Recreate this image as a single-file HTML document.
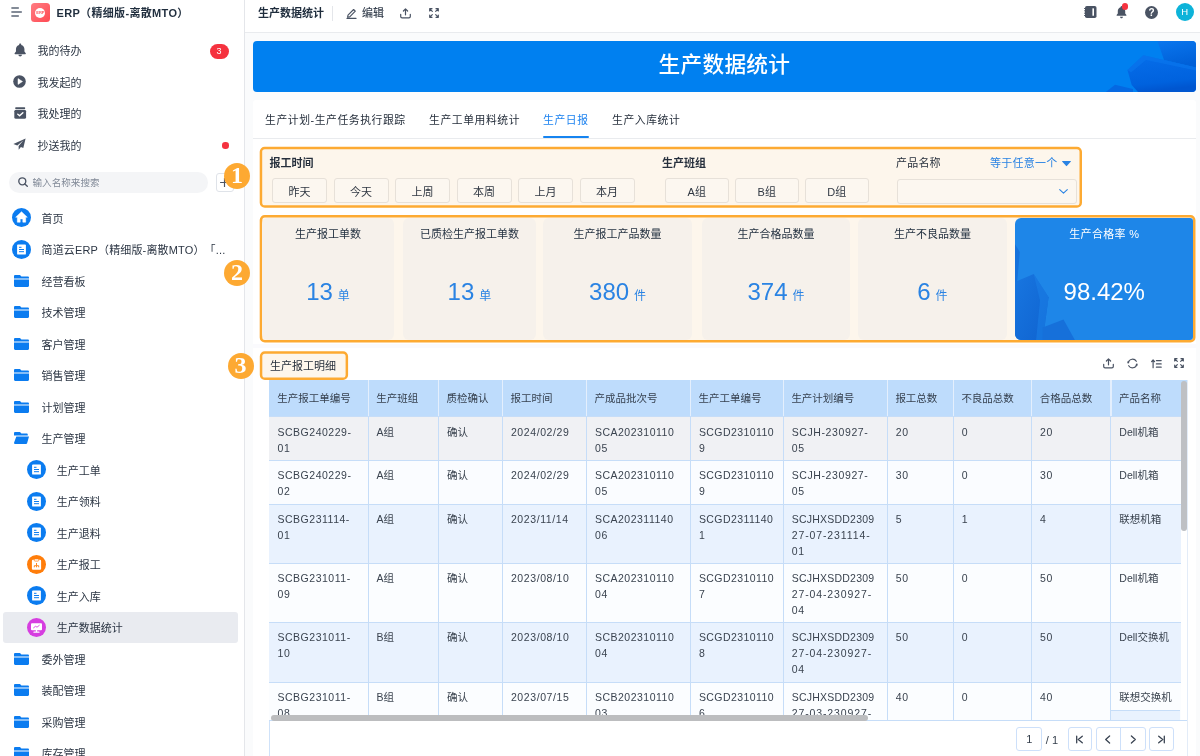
<!DOCTYPE html>
<html lang="zh-CN">
<head>
<meta charset="utf-8">
<title>生产数据统计</title>
<style>
*{box-sizing:border-box;margin:0;padding:0}
html,body{width:1200px;height:756px;overflow:hidden;background:#fff}
body{font-family:"Liberation Sans","Noto Sans CJK SC",sans-serif;color:#27303d;font-size:11px;position:relative}
#root{position:absolute;left:0;top:0;width:1200px;height:756px;overflow:hidden;background:#fff;will-change:transform}
.a{position:absolute}
.t{position:absolute;white-space:nowrap;line-height:16px;height:16px}
.b{font-weight:700}
svg{position:absolute;overflow:visible}
/* sidebar */
#side{position:absolute;left:0;top:0;width:244px;height:756px;background:#fff}
#sideline{position:absolute;left:244px;top:0;width:1px;height:756px;background:#e4e6ea}
.si{font-size:11px;color:#2c3644}
/* main */
#mainbg{position:absolute;left:245px;top:33px;width:955px;height:723px;background:#fafbfc}
#topbar{position:absolute;left:245px;top:0;width:955px;height:32px;background:#fff}
#topline{position:absolute;left:245px;top:32px;width:955px;height:1px;background:#e9ebee}
#banner{position:absolute;left:253px;top:41px;width:942.5px;height:51px;background:#0080f0;border-radius:4px;overflow:hidden}
#card{position:absolute;left:253px;top:100px;width:942.5px;height:656px;background:#fff;border-radius:3px 3px 0 0}
.ob{position:absolute;border:2.500px solid #fdaa32;border-radius:5px;background:#fdf6ec}
.fb{position:absolute;top:178.2px;height:24.5px;border:1px solid #e7e1d9;border-radius:3px;background:#fcf7f0;font-size:11px;line-height:26.4px;text-align:center;color:#2f3742;overflow:hidden}
.sc{position:absolute;top:217.700px;height:122.500px;background:#f6f1eb;border-radius:6px}
.sl{position:absolute;top:226.2px;height:16px;line-height:16px;font-size:11px;text-align:center;color:#1f2d3d;white-space:nowrap}
.sn{position:absolute;top:276px;height:32px;line-height:32px;text-align:center;color:#2a83e3;white-space:nowrap;font-size:24px}
.sn small{font-size:12px;margin-left:5px}
.num{position:absolute;width:26px;height:26px;border-radius:13px;background:#fda932;color:#fff;font-family:"Liberation Serif","Noto Serif CJK SC",serif;font-weight:700;font-size:24px;line-height:25px;text-align:center}
/* table */
.th{position:absolute;top:379.800px;height:37.100px;background:#bedcfc;font-size:10.5px;line-height:16px;padding:10.5px 0 0 8.2px;color:#36414f;white-space:nowrap;overflow:hidden}
.td{position:absolute;font-size:10.5px;line-height:16px;padding:6.700px 0 0 8.500px;color:#3a434f;white-space:nowrap;overflow:hidden}
.vl{position:absolute;width:1px;background:#c6ddf8}
.hl{position:absolute;height:1px;background:#c6ddf8}
.pg{position:absolute;top:727.2px;height:24.1px;border:1.2px solid #cde0fa;border-radius:3px;background:#fff;font-size:11px;line-height:22.6px;text-align:center;color:#36404d}
</style>
</head>
<body>
<div id="root">
<div id="side">
<svg style="left:11px;top:7px" width="12" height="10" viewBox="0 0 12 10"><g stroke="#5b6576" stroke-width="1.5" stroke-linecap="round"><path d="M0.9 1.1H7.3M0.9 5.1H10.3M0.9 9.1H7.3"/></g></svg>
<div class="a" style="left:30.8px;top:3.2px;width:19.1px;height:19.1px;border-radius:3.5px;background:linear-gradient(135deg,#ff7d83,#ff4a53)"></div>
<div class="a" style="left:35.3px;top:7.6px;width:10px;height:10px;border-radius:5px;background:#fff;color:#ff5a62;font-size:4px;font-weight:700;line-height:10px;text-align:center;letter-spacing:-.1px">ERP</div>
<div class="t b" style="left:56.5px;top:4.5px;font-size:11px;color:#1f2d3d;letter-spacing:.33px">ERP（精细版-离散MTO）</div>
<div class="t si" style="left:37.5px;top:43.0px;">我的待办</div>
<div class="t si" style="left:37.5px;top:74.5px;">我发起的</div>
<div class="t si" style="left:37.5px;top:106.0px;">我处理的</div>
<div class="t si" style="left:37.5px;top:137.5px;">抄送我的</div>
<svg style="left:13.800px;top:43.200px" width="12.400" height="14.200" viewBox="0 0 12 14" preserveAspectRatio="none"><path fill="#4a5363" d="M6 0.6c.6 0 1 .4 1 1v.3c1.9.5 3.1 2.100 3.1 4.100v2.500l1.300 1.700c.2.300 0 .800-.400.800H1c-.4 0-.6-.500-.4-.800L1.900 8.500V6c0-2 1.200-3.600 3.100-4.100v-.3c0-.6.400-1 1-1zM4.300 11.700h3.400c0 .9-.800 1.600-1.700 1.600s-1.700-.700-1.700-1.600z"/></svg>
<svg style="left:13.200px;top:75.400px" width="13" height="13" viewBox="0 0 13 13"><circle cx="6.5" cy="6.5" r="6.300" fill="#4a5363"/><path d="M5 3.600L9.500 6.500L5 9.400z" fill="#fff" stroke="#fff" stroke-width=".5" stroke-linejoin="round"/></svg>
<svg style="left:13.600px;top:106.800px" width="12.400" height="12.200" viewBox="0 0 12 13" preserveAspectRatio="none"><rect x="1.2" y="0.3" width="9.6" height="1.8" rx=".6" fill="#4a5363"/><rect x="0.3" y="3" width="11.4" height="9.5" rx="1.600" fill="#4a5363"/><path d="M3.600 7.600l1.800 1.800 3.200-3.300" fill="none" stroke="#fff" stroke-width="1.400" stroke-linecap="round" stroke-linejoin="round"/></svg>
<svg style="left:13.300px;top:138px" width="13" height="12.300" viewBox="0 0 13 13" preserveAspectRatio="none"><path fill="#4a5363" d="M12.600 .5L.4 6.300l3.900 1.500 6.200-5.400-4.900 6 .1 3.900 2.200-2.700 2.400 1z"/></svg>
<div class="a" style="left:209.500px;top:43.500px;width:19px;height:15px;border-radius:7.500px;background:#f5323f;color:#fff;font-size:9px;line-height:15px;text-align:center">3</div>
<div class="a" style="left:222.200px;top:142.300px;width:6.400px;height:6.400px;border-radius:50%;background:#f5323f"></div>
<div class="a" style="left:9px;top:172px;width:198.500px;height:20.600px;border-radius:10.300px;background:#f4f5f7"></div>
<svg style="left:18px;top:177.200px" width="10" height="10" viewBox="0 0 10 10"><circle cx="4.300" cy="4.300" r="3.500" fill="none" stroke="#4a5363" stroke-width="1.350"/><path d="M6.900 6.900L9.300 9.300" stroke="#4a5363" stroke-width="1.350" stroke-linecap="round"/></svg>
<div class="t " style="left:32.5px;top:174.6px;font-size:9.600px;color:#808997">输入名称来搜索</div>
<div class="a" style="left:215.700px;top:173.300px;width:18.300px;height:18.300px;border:1px solid #dfe3e9;border-radius:3px;background:#fff"></div>
<svg style="left:219.900px;top:177.900px" width="9" height="9" viewBox="0 0 9 9"><path d="M4.500 .1V8.900M.1 4.500H8.900" stroke="#4a5363" stroke-width="1.150"/></svg>
<div class="a" style="left:3px;top:612px;width:235px;height:31px;border-radius:3px;background:#e9ebf0"></div>
<svg style="left:11.8px;top:208.4px" width="19" height="19" viewBox="0 0 19 19"><circle cx="9.5" cy="9.5" r="9.500" fill="#0b7cf0"/><path d="M9.500 3.700L3.700 9.200h1.600v5h2.900v-3.300h2.600v3.300h2.900v-5h1.600z" fill="#fff" stroke="#fff" stroke-width=".5" stroke-linejoin="round"/></svg>
<div class="t si" style="left:41.5px;top:210.70000000000002px;">首页</div>
<svg style="left:11.8px;top:239.9px" width="19" height="19" viewBox="0 0 19 19"><circle cx="9.5" cy="9.5" r="9.500" fill="#0b7cf0"/><rect x="5.100" y="4.400" width="8.800" height="10.200" rx=".9" fill="#fff"/><path d="M7 7.300h2.500M7 9.500h5M7 11.700h5" stroke="#0b7cf0" stroke-width="1"/></svg>
<div class="t si" style="left:41.5px;top:242.20000000000002px;text-spacing-trim:space-all;letter-spacing:.15px">简道云ERP（精细版-离散MTO）「...</div>
<svg style="left:14.2px;top:274.9px" width="15" height="12" viewBox="0 0 15 12"><path fill="#0b7cf0" d="M1.200 0h4.300c.4 0 .7.150 .95.450L7.400 1.600H13.800c.66 0 1.200.54 1.200 1.200V3.400H0V1.200C0 .54.54 0 1.200 0z"/><path fill="#0b7cf0" d="M0 4.400h15v6.400c0 .66-.54 1.200-1.200 1.200H1.200C.54 12 0 11.460 0 10.800z"/></svg>
<div class="t si" style="left:41.5px;top:273.7px;">经营看板</div>
<svg style="left:14.2px;top:306.4px" width="15" height="12" viewBox="0 0 15 12"><path fill="#0b7cf0" d="M1.200 0h4.300c.4 0 .7.150 .95.450L7.400 1.600H13.800c.66 0 1.200.54 1.200 1.200V3.400H0V1.200C0 .54.54 0 1.200 0z"/><path fill="#0b7cf0" d="M0 4.400h15v6.400c0 .66-.54 1.200-1.200 1.200H1.200C.54 12 0 11.460 0 10.800z"/></svg>
<div class="t si" style="left:41.5px;top:305.2px;">技术管理</div>
<svg style="left:14.2px;top:337.9px" width="15" height="12" viewBox="0 0 15 12"><path fill="#0b7cf0" d="M1.200 0h4.300c.4 0 .7.150 .95.450L7.400 1.600H13.800c.66 0 1.200.54 1.200 1.200V3.400H0V1.200C0 .54.54 0 1.200 0z"/><path fill="#0b7cf0" d="M0 4.400h15v6.400c0 .66-.54 1.200-1.200 1.200H1.200C.54 12 0 11.460 0 10.800z"/></svg>
<div class="t si" style="left:41.5px;top:336.7px;">客户管理</div>
<svg style="left:14.2px;top:369.4px" width="15" height="12" viewBox="0 0 15 12"><path fill="#0b7cf0" d="M1.200 0h4.300c.4 0 .7.150 .95.450L7.400 1.600H13.800c.66 0 1.200.54 1.200 1.200V3.400H0V1.200C0 .54.54 0 1.200 0z"/><path fill="#0b7cf0" d="M0 4.400h15v6.400c0 .66-.54 1.200-1.200 1.200H1.200C.54 12 0 11.460 0 10.800z"/></svg>
<div class="t si" style="left:41.5px;top:368.2px;">销售管理</div>
<svg style="left:14.2px;top:400.9px" width="15" height="12" viewBox="0 0 15 12"><path fill="#0b7cf0" d="M1.200 0h4.300c.4 0 .7.150 .95.450L7.400 1.600H13.800c.66 0 1.200.54 1.200 1.200V3.400H0V1.200C0 .54.54 0 1.200 0z"/><path fill="#0b7cf0" d="M0 4.400h15v6.400c0 .66-.54 1.200-1.200 1.200H1.200C.54 12 0 11.460 0 10.800z"/></svg>
<div class="t si" style="left:41.5px;top:399.7px;">计划管理</div>
<svg style="left:14.2px;top:432.4px" width="15" height="12" viewBox="0 0 15 12"><path fill="#0b7cf0" d="M1.200 0h4.300c.4 0 .7.150 .95.450L7.400 1.600H12.600c.66 0 1.200.54 1.200 1.200V3.400H0V1.200C0 .54.54 0 1.200 0z"/><path fill="#0b7cf0" d="M2.300 4.400H15l-1.900 6.800c-.13.470-.56.800-1.050.800H.900C.3 12-.130 11.430.040 10.860z"/></svg>
<div class="t si" style="left:41.5px;top:431.2px;">生产管理</div>
<svg style="left:27.4px;top:460.4px" width="19" height="19" viewBox="0 0 19 19"><circle cx="9.5" cy="9.5" r="9.500" fill="#0b7cf0"/><rect x="5.100" y="4.400" width="8.800" height="10.200" rx=".9" fill="#fff"/><path d="M7 7.300h2.500M7 9.500h5M7 11.700h5" stroke="#0b7cf0" stroke-width="1"/></svg>
<div class="t si" style="left:56.8px;top:462.7px;">生产工单</div>
<svg style="left:27.4px;top:491.9px" width="19" height="19" viewBox="0 0 19 19"><circle cx="9.5" cy="9.5" r="9.500" fill="#0b7cf0"/><rect x="5.100" y="4.400" width="8.800" height="10.200" rx=".9" fill="#fff"/><path d="M7 7.300h2.500M7 9.500h5M7 11.700h5" stroke="#0b7cf0" stroke-width="1"/></svg>
<div class="t si" style="left:56.8px;top:494.2px;">生产领料</div>
<svg style="left:27.4px;top:523.4px" width="19" height="19" viewBox="0 0 19 19"><circle cx="9.5" cy="9.5" r="9.500" fill="#0b7cf0"/><rect x="5.100" y="4.400" width="8.800" height="10.200" rx=".9" fill="#fff"/><path d="M7 7.300h2.500M7 9.500h5M7 11.700h5" stroke="#0b7cf0" stroke-width="1"/></svg>
<div class="t si" style="left:56.8px;top:525.6999999999999px;">生产退料</div>
<svg style="left:27.4px;top:554.9px" width="19" height="19" viewBox="0 0 19 19"><circle cx="9.5" cy="9.5" r="9.500" fill="#ff7d0a"/><rect x="4.900" y="4.800" width="9.200" height="10" rx="1.100" fill="#fff"/><rect x="7.300" y="3.900" width="4.400" height="2.200" rx=".7" fill="#fff" stroke="#ff7d0a" stroke-width=".7"/><path d="M9.500 8v2.200M7.300 12.300v-1.600h4.400v1.600M9.500 10.500v1.800" fill="none" stroke="#ff7d0a" stroke-width=".9"/></svg>
<div class="t si" style="left:56.8px;top:557.1999999999999px;">生产报工</div>
<svg style="left:27.4px;top:586.4px" width="19" height="19" viewBox="0 0 19 19"><circle cx="9.5" cy="9.5" r="9.500" fill="#0b7cf0"/><rect x="5.100" y="4.400" width="8.800" height="10.200" rx=".9" fill="#fff"/><path d="M7 7.300h2.500M7 9.500h5M7 11.700h5" stroke="#0b7cf0" stroke-width="1"/></svg>
<div class="t si" style="left:56.8px;top:588.6999999999999px;">生产入库</div>
<svg style="left:27.4px;top:617.9px" width="19" height="19" viewBox="0 0 19 19"><circle cx="9.5" cy="9.5" r="9.500" fill="#d63ee0"/><rect x="4" y="5.300" width="11" height="6.900" rx="1" fill="#fff"/><path d="M7 14.200h5M9.500 12v2" stroke="#fff" stroke-width="1.300" stroke-linecap="round"/><path d="M6.300 10l2.200-1.700 1.500.9 2.600-2.100" fill="none" stroke="#d63ee0" stroke-width=".9"/></svg>
<div class="t si" style="left:56.8px;top:620.1999999999999px;">生产数据统计</div>
<svg style="left:14.2px;top:652.9px" width="15" height="12" viewBox="0 0 15 12"><path fill="#0b7cf0" d="M1.200 0h4.300c.4 0 .7.150 .95.450L7.400 1.600H13.800c.66 0 1.200.54 1.200 1.200V3.400H0V1.200C0 .54.54 0 1.200 0z"/><path fill="#0b7cf0" d="M0 4.400h15v6.400c0 .66-.54 1.200-1.200 1.200H1.200C.54 12 0 11.460 0 10.800z"/></svg>
<div class="t si" style="left:41.5px;top:651.6999999999999px;">委外管理</div>
<svg style="left:14.2px;top:684.4px" width="15" height="12" viewBox="0 0 15 12"><path fill="#0b7cf0" d="M1.200 0h4.300c.4 0 .7.150 .95.450L7.400 1.600H13.800c.66 0 1.200.54 1.200 1.200V3.400H0V1.200C0 .54.54 0 1.200 0z"/><path fill="#0b7cf0" d="M0 4.400h15v6.400c0 .66-.54 1.200-1.200 1.200H1.200C.54 12 0 11.460 0 10.800z"/></svg>
<div class="t si" style="left:41.5px;top:683.1999999999999px;">装配管理</div>
<svg style="left:14.2px;top:715.9px" width="15" height="12" viewBox="0 0 15 12"><path fill="#0b7cf0" d="M1.200 0h4.300c.4 0 .7.150 .95.450L7.400 1.600H13.800c.66 0 1.200.54 1.200 1.200V3.400H0V1.200C0 .54.54 0 1.200 0z"/><path fill="#0b7cf0" d="M0 4.400h15v6.400c0 .66-.54 1.200-1.200 1.200H1.200C.54 12 0 11.460 0 10.800z"/></svg>
<div class="t si" style="left:41.5px;top:714.6999999999999px;">采购管理</div>
<svg style="left:14.2px;top:747.4px" width="15" height="12" viewBox="0 0 15 12"><path fill="#0b7cf0" d="M1.200 0h4.300c.4 0 .7.150 .95.450L7.400 1.600H13.800c.66 0 1.200.54 1.200 1.200V3.400H0V1.200C0 .54.54 0 1.200 0z"/><path fill="#0b7cf0" d="M0 4.400h15v6.400c0 .66-.54 1.200-1.200 1.200H1.200C.54 12 0 11.460 0 10.800z"/></svg>
<div class="t si" style="left:41.5px;top:746.1999999999999px;">库存管理</div>
</div>
<div id="sideline"></div>
<div id="mainbg"></div>
<div id="topbar"></div>
<div id="topline"></div>
<div class="t b" style="left:258px;top:5.0px;font-size:11px;color:#1f2d3d">生产数据统计</div>
<div class="a" style="left:332px;top:5.500px;width:1px;height:15px;background:#e4e6ea"></div>
<svg style="left:346px;top:7.500px" width="11" height="11" viewBox="0 0 11 11"><g fill="none" stroke="#4a5363" stroke-width="1.150" stroke-linejoin="round" stroke-linecap="round"><path d="M2 7.200L7.600 1.500l1.700 1.700L3.700 8.900l-2.100.4z"/><path d="M1 10.400h9"/></g></svg>
<div class="t " style="left:362px;top:5.0px;font-size:11px;color:#3a4452;font-weight:500">编辑</div>
<svg style="left:400.3px;top:7.9px" width="11" height="11" viewBox="0 0 11 11"><g fill="none" stroke="#4a5363" stroke-width="1.200" stroke-linecap="round" stroke-linejoin="round"><path d="M5.500 6.800V1M3.400 3L5.500.9l2.100 2.100"/><path d="M.7 6.300v2.200c0 .8.600 1.400 1.400 1.400h6.800c.8 0 1.400-.600 1.400-1.400V6.300"/></g></svg>
<svg style="left:429.1px;top:8.4px" width="10" height="10" viewBox="0 0 10 10"><g fill="none" stroke="#4a5363" stroke-width="1.200" stroke-linecap="round" stroke-linejoin="round"><path d="M.7 3V.7h2.300M.9.900l2.400 2.400"/><path d="M7 .7h2.300V3M9.100.9L6.700 3.300"/><path d="M.7 7v2.300h2.300M.9 9.100l2.400-2.400"/><path d="M7 9.300h2.300V7M9.100 9.100L6.700 6.700"/></g></svg>
<svg style="left:1083.500px;top:5.800px" width="13" height="12" viewBox="0 0 13 12"><rect x="1" y="0" width="11.500" height="12" rx="1.800" fill="#4a5363"/><rect x="8.400" y="2.200" width="1.600" height="7.600" rx=".5" fill="#fff"/><path d="M0 2.500h1.500M0 4.800h1.500M0 7.200h1.500M0 9.500h1.500" stroke="#4a5363" stroke-width=".9"/></svg>
<svg style="left:1115.500px;top:5.500px" width="11" height="13" viewBox="0 0 11 13"><path fill="#4a5363" d="M5.500 0c.5 0 .9.400.9.900v.3c1.700.5 2.800 2 2.800 3.800v2.400l1.200 1.600c.2.300 0 .700-.400.700H1c-.4 0-.6-.400-.4-.700L1.800 7.400V5c0-1.800 1.100-3.300 2.800-3.800V.9c0-.5.400-.9.900-.9zM4 10.800h3c0 .9-.700 1.500-1.500 1.500S4 11.700 4 10.800z"/></svg>
<div class="a" style="left:1121.700px;top:3.100px;width:6.600px;height:6.600px;border-radius:50%;background:#f5323f"></div>
<div class="a" style="left:1145px;top:5.500px;width:13px;height:13px;border-radius:50%;background:#4a5363;color:#fff;font-size:10px;font-weight:700;line-height:13.500px;text-align:center">?</div>
<div class="a" style="left:1175.700px;top:3.300px;width:18px;height:18px;border-radius:50%;background:#0db3d9;color:#fff;font-size:9.500px;line-height:18px;text-align:center">H</div>
<div id="banner"><svg style="left:0;top:0" width="942.500" height="51" viewBox="253 41 942.500 51"><defs><linearGradient id="g1" x1="0" y1="0" x2="0.300" y2="1"><stop offset="0" stop-color="#0a76ee"/><stop offset="1" stop-color="#0060d8"/></linearGradient><linearGradient id="g2" x1="0" y1="0" x2="0.200" y2="1"><stop offset="0" stop-color="#066eea"/><stop offset=".8" stop-color="#0062de"/><stop offset="1" stop-color="#0056d0"/></linearGradient></defs><polygon points="1157.500,41 1196,41 1196,67.500 1164,60" fill="url(#g1)"/><polygon points="1143.300,55.300 1164,60 1196,67.500 1196,92 1138,92 1131.700,85 1127.500,70" fill="url(#g2)"/><polygon points="1127.500,70 1143.300,55.300 1196,67.500 1196,70.500 1146,60 1131,72.500" fill="#0b78ee" opacity=".55"/><polygon points="1105.800,92 1115,84.700 1133,89 1133,92" fill="#0468e2"/></svg><div class="t" style="left:0;width:942.500px;top:8px;height:32px;line-height:32px;text-align:center;color:#fff;font-size:21.700px;letter-spacing:.3px;font-weight:500;text-indent:.3px">生产数据统计</div></div>
<div id="card"></div>
<div class="t " style="left:265px;top:112.0px;font-size:10.800px;letter-spacing:.58px">生产计划-生产任务执行跟踪</div>
<div class="t " style="left:429px;top:112.0px;font-size:10.800px;letter-spacing:.58px">生产工单用料统计</div>
<div class="t " style="left:543px;top:112.0px;font-size:10.800px;letter-spacing:.58px;color:#1c82f0">生产日报</div>
<div class="t " style="left:612px;top:112.0px;font-size:10.800px;letter-spacing:.58px">生产入库统计</div>
<div class="a" style="left:543px;top:136px;width:45.500px;height:2px;border-radius:1px;background:#1684f0"></div>
<div class="a" style="left:253px;top:138px;width:942.500px;height:1px;background:#e9ebee"></div>
<svg style="left:0;top:0" width="1200" height="756" viewBox="0 0 1200 756"><rect x="260.95" y="147.95" width="819.8" height="58.5" rx="3.800" fill="#fdf6ec" stroke="#fdaa32" stroke-width="2.5"/></svg>
<div class="t b" style="left:269.5px;top:155.0px;">报工时间</div>
<div class="fb" style="left:272.0px;width:55px">昨天</div>
<div class="fb" style="left:333.5px;width:55px">今天</div>
<div class="fb" style="left:395.0px;width:55px">上周</div>
<div class="fb" style="left:456.5px;width:55px">本周</div>
<div class="fb" style="left:518.0px;width:55px">上月</div>
<div class="fb" style="left:579.5px;width:55px">本月</div>
<div class="t b" style="left:662px;top:155.0px;">生产班组</div>
<div class="fb" style="left:665px;width:63.500px">A组</div>
<div class="fb" style="left:735px;width:63.500px">B组</div>
<div class="fb" style="left:805px;width:63.500px">D组</div>
<div class="t " style="left:896px;top:155.0px;color:#27303d;letter-spacing:.2px">产品名称</div>
<div class="t " style="left:990px;top:155.0px;color:#2a83e3;letter-spacing:.25px">等于任意一个</div>
<svg style="left:1062.200px;top:160.700px" width="9" height="5.300" viewBox="0 0 9 5.300"><path d="M.3 0h8.400c.25 0 .38.300.2.480L4.800 5.100c-.17.200-.43.200-.6 0L.1.480C-.08.300.050 0 .3 0z" fill="#2a83e3"/></svg>
<div class="fb" style="left:896.500px;width:180.700px;top:179px;height:24.700px"></div>
<svg style="left:1059px;top:189px" width="9" height="5" viewBox="0 0 9 5"><path d="M.7.600L4.500 4.200 8.300.6" fill="none" stroke="#2a83e3" stroke-width="1.100" stroke-linecap="round" stroke-linejoin="round"/></svg>
<svg style="left:0;top:0" width="1200" height="756" viewBox="0 0 1200 756"><rect x="261.0" y="216.3" width="933.1999999999999" height="125.0" rx="3.800" fill="#fdf6ec" stroke="#fdaa32" stroke-width="2.6"/></svg>
<div class="sc" style="left:262px;width:132px"></div>
<div class="sl" style="left:262px;width:132px">生产报工单数</div>
<div class="sn" style="left:262px;width:132px">13<small>单</small></div>
<div class="sc" style="left:402.8px;width:133.2px"></div>
<div class="sl" style="left:402.8px;width:133.2px">已质检生产报工单数</div>
<div class="sn" style="left:402.8px;width:133.2px">13<small>单</small></div>
<div class="sc" style="left:543.2px;width:148.79999999999995px"></div>
<div class="sl" style="left:543.2px;width:148.79999999999995px">生产报工产品数量</div>
<div class="sn" style="left:543.2px;width:148.79999999999995px">380<small>件</small></div>
<div class="sc" style="left:702px;width:148px"></div>
<div class="sl" style="left:702px;width:148px">生产合格品数量</div>
<div class="sn" style="left:702px;width:148px">374<small>件</small></div>
<div class="sc" style="left:858px;width:148.79999999999995px"></div>
<div class="sl" style="left:858px;width:148.79999999999995px">生产不良品数量</div>
<div class="sn" style="left:858px;width:148.79999999999995px">6<small>件</small></div>
<div class="a" style="left:1015px;top:217.500px;width:178px;height:122.500px;background:#1e86e8;border-radius:6px 3px 3px 6px;overflow:hidden"><svg style="left:0;top:0" width="178.500" height="123" viewBox="1015 217.500 178.500 123"><defs><linearGradient id="g3" x1="0" y1="0" x2="1" y2="1"><stop offset="0" stop-color="#1876e0"/><stop offset="1" stop-color="#0f63d0"/></linearGradient></defs><polygon points="1015,243.700 1019.800,251.600 1016.900,284.400 1015,284.400" fill="#1672dc"/><polygon points="1015,281.400 1033.700,273.500 1048.600,296.700 1042.700,340.500 1015,340.500" fill="url(#g3)"/><polygon points="1033.700,273.500 1048.600,296.700 1042.700,340.500 1036,340.500 1040,300" fill="#1b7ee6" opacity=".6"/><polygon points="1042.700,327 1063.500,319 1075.400,340.500 1042.700,340.500" fill="#1670da"/></svg></div>
<div class="sl" style="left:1015px;width:178.500px;color:#fff;letter-spacing:.3px">生产合格率 %</div>
<div class="sn" style="left:1015px;width:178.500px;color:#fff;top:275.500px">98.42%</div>
<div class="a" style="left:253px;top:344.200px;width:942.500px;height:3.600px;background:#fafafd"></div>
<div class="num" style="left:224px;top:163px">1</div>
<div class="num" style="left:224px;top:260.400px">2</div>
<div class="num" style="left:227.500px;top:352.500px;width:26px;height:26px;line-height:25px">3</div>
<svg style="left:0;top:0" width="1200" height="756" viewBox="0 0 1200 756"><rect x="261.05" y="352.55" width="85.8" height="26.3" rx="3.800" fill="#fdf6ec" stroke="#fdaa32" stroke-width="2.5"/></svg>
<div class="t " style="left:270px;top:357.5px;font-size:11px">生产报工明细</div>
<svg style="left:1103.1px;top:357.5px" width="11" height="11" viewBox="0 0 11 11"><g fill="none" stroke="#4a5363" stroke-width="1.200" stroke-linecap="round" stroke-linejoin="round"><path d="M5.500 6.800V1M3.400 3L5.500.9l2.100 2.100"/><path d="M.7 6.300v2.200c0 .8.600 1.400 1.400 1.400h6.800c.8 0 1.400-.600 1.400-1.400V6.300"/></g></svg>
<svg style="left:1126.800px;top:357.500px" width="11" height="11" viewBox="0 0 11 11"><g fill="none" stroke="#4a5363" stroke-width="1.200" stroke-linecap="round" stroke-linejoin="round"><path d="M1.300 4.400A4.400 4.400 0 0 1 9.300 3.300"/><path d="M9.700 6.600a4.400 4.400 0 0 1-8 1.100"/></g><path d="M.1 3.500l2.500.3L1 6z" fill="#4a5363"/><path d="M10.900 7.500l-2.500-.3L10 5z" fill="#4a5363"/></svg>
<svg style="left:1150.500px;top:358.600px" width="11" height="10" viewBox="0 0 11 10"><g fill="none" stroke="#4a5363" stroke-width="1.200" stroke-linecap="round" stroke-linejoin="round"><path d="M2.100 8.700V1.100M.6 2.600L2.100 1l1.500 1.600"/><path d="M5.400 1.600h4.800M5.400 4.900h4.800M5.400 8.200h4.800"/></g></svg>
<svg style="left:1174.4px;top:358.3px" width="10" height="10" viewBox="0 0 10 10"><g fill="none" stroke="#4a5363" stroke-width="1.200" stroke-linecap="round" stroke-linejoin="round"><path d="M.7 3V.7h2.300M.9.900l2.400 2.400"/><path d="M7 .7h2.300V3M9.100.9L6.700 3.300"/><path d="M.7 7v2.300h2.300M.9 9.100l2.400-2.400"/><path d="M7 9.300h2.300V7M9.100 9.100L6.700 6.700"/></g></svg>
<div class="a" style="left:269px;top:380px;width:918.500px;height:376px;border-left:1px solid #cfe2f9;border-right:1px solid #e3ecf8"></div>
<div class="th" style="left:269px;width:99px">生产报工单编号</div>
<div class="th" style="left:368px;width:70.39999999999998px">生产班组</div>
<div class="th" style="left:438.4px;width:64.0px">质检确认</div>
<div class="th" style="left:502.4px;width:84.0px">报工时间</div>
<div class="th" style="left:586.4px;width:104.0px">产成品批次号</div>
<div class="th" style="left:690.4px;width:92.80000000000007px">生产工单编号</div>
<div class="th" style="left:783.2px;width:104.0px">生产计划编号</div>
<div class="th" style="left:887.2px;width:66.0px">报工总数</div>
<div class="th" style="left:953.2px;width:78.39999999999986px">不良品总数</div>
<div class="th" style="left:1031.6px;width:79.20000000000005px">合格品总数</div>
<div class="th" style="left:1110.8px;width:76.70000000000005px">产品名称</div>
<div class="a" style="left:269px;top:416.9px;width:911.5px;height:43.60000000000002px;background:#f0f1f4"></div>
<div class="td" style="left:269px;top:416.9px;width:99px;height:43.60000000000002px"><span style="letter-spacing:0.511px">SCBG240229-</span><br><span style="letter-spacing:0.67px">01</span></div>
<div class="td" style="left:368px;top:416.9px;width:70.39999999999998px;height:43.60000000000002px">A组</div>
<div class="td" style="left:438.4px;top:416.9px;width:64.0px;height:43.60000000000002px">确认</div>
<div class="td" style="left:502.4px;top:416.9px;width:84.0px;height:43.60000000000002px"><span style="letter-spacing:0.596px">2024/02/29</span></div>
<div class="td" style="left:586.4px;top:416.9px;width:104.0px;height:43.60000000000002px"><span style="letter-spacing:0.503px">SCA202310110</span><br><span style="letter-spacing:0.67px">05</span></div>
<div class="td" style="left:690.4px;top:416.9px;width:92.80000000000007px;height:43.60000000000002px"><span style="letter-spacing:0.426px">SCGD2310110</span><br><span style="letter-spacing:0.67px">9</span></div>
<div class="td" style="left:783.2px;top:416.9px;width:104.0px;height:43.60000000000002px"><span style="letter-spacing:0.602px">SCJH-230927-</span><br><span style="letter-spacing:0.67px">05</span></div>
<div class="td" style="left:887.2px;top:416.9px;width:66.0px;height:43.60000000000002px"><span style="letter-spacing:0.67px">20</span></div>
<div class="td" style="left:953.2px;top:416.9px;width:78.39999999999986px;height:43.60000000000002px"><span style="letter-spacing:0.67px">0</span></div>
<div class="td" style="left:1031.6px;top:416.9px;width:79.20000000000005px;height:43.60000000000002px"><span style="letter-spacing:0.67px">20</span></div>
<div class="td" style="left:1110.8px;top:416.9px;width:69.70000000000005px;height:43.60000000000002px"><span style="letter-spacing:0.0px">Dell机箱</span></div>
<div class="a" style="left:269px;top:460.5px;width:911.5px;height:43.60000000000002px;background:#fafcff"></div>
<div class="td" style="left:269px;top:460.5px;width:99px;height:43.60000000000002px"><span style="letter-spacing:0.511px">SCBG240229-</span><br><span style="letter-spacing:0.67px">02</span></div>
<div class="td" style="left:368px;top:460.5px;width:70.39999999999998px;height:43.60000000000002px">A组</div>
<div class="td" style="left:438.4px;top:460.5px;width:64.0px;height:43.60000000000002px">确认</div>
<div class="td" style="left:502.4px;top:460.5px;width:84.0px;height:43.60000000000002px"><span style="letter-spacing:0.596px">2024/02/29</span></div>
<div class="td" style="left:586.4px;top:460.5px;width:104.0px;height:43.60000000000002px"><span style="letter-spacing:0.503px">SCA202310110</span><br><span style="letter-spacing:0.67px">05</span></div>
<div class="td" style="left:690.4px;top:460.5px;width:92.80000000000007px;height:43.60000000000002px"><span style="letter-spacing:0.426px">SCGD2310110</span><br><span style="letter-spacing:0.67px">9</span></div>
<div class="td" style="left:783.2px;top:460.5px;width:104.0px;height:43.60000000000002px"><span style="letter-spacing:0.602px">SCJH-230927-</span><br><span style="letter-spacing:0.67px">05</span></div>
<div class="td" style="left:887.2px;top:460.5px;width:66.0px;height:43.60000000000002px"><span style="letter-spacing:0.67px">30</span></div>
<div class="td" style="left:953.2px;top:460.5px;width:78.39999999999986px;height:43.60000000000002px"><span style="letter-spacing:0.67px">0</span></div>
<div class="td" style="left:1031.6px;top:460.5px;width:79.20000000000005px;height:43.60000000000002px"><span style="letter-spacing:0.67px">30</span></div>
<div class="td" style="left:1110.8px;top:460.5px;width:69.70000000000005px;height:43.60000000000002px"><span style="letter-spacing:0.0px">Dell机箱</span></div>
<div class="a" style="left:269px;top:504.1px;width:911.5px;height:59.299999999999955px;background:#e9f2fe"></div>
<div class="td" style="left:269px;top:504.1px;width:99px;height:59.299999999999955px"><span style="letter-spacing:0.511px">SCBG231114-</span><br><span style="letter-spacing:0.67px">01</span></div>
<div class="td" style="left:368px;top:504.1px;width:70.39999999999998px;height:59.299999999999955px">A组</div>
<div class="td" style="left:438.4px;top:504.1px;width:64.0px;height:59.299999999999955px">确认</div>
<div class="td" style="left:502.4px;top:504.1px;width:84.0px;height:59.299999999999955px"><span style="letter-spacing:0.596px">2023/11/14</span></div>
<div class="td" style="left:586.4px;top:504.1px;width:104.0px;height:59.299999999999955px"><span style="letter-spacing:0.503px">SCA202311140</span><br><span style="letter-spacing:0.67px">06</span></div>
<div class="td" style="left:690.4px;top:504.1px;width:92.80000000000007px;height:59.299999999999955px"><span style="letter-spacing:0.426px">SCGD2311140</span><br><span style="letter-spacing:0.67px">1</span></div>
<div class="td" style="left:783.2px;top:504.1px;width:104.0px;height:59.299999999999955px"><span style="letter-spacing:0.223px">SCJHXSDD2309</span><br><span style="letter-spacing:0.885px">27-07-231114-</span><br><span style="letter-spacing:0.67px">01</span></div>
<div class="td" style="left:887.2px;top:504.1px;width:66.0px;height:59.299999999999955px"><span style="letter-spacing:0.67px">5</span></div>
<div class="td" style="left:953.2px;top:504.1px;width:78.39999999999986px;height:59.299999999999955px"><span style="letter-spacing:0.67px">1</span></div>
<div class="td" style="left:1031.6px;top:504.1px;width:79.20000000000005px;height:59.299999999999955px"><span style="letter-spacing:0.67px">4</span></div>
<div class="td" style="left:1110.8px;top:504.1px;width:69.70000000000005px;height:59.299999999999955px">联想机箱</div>
<div class="a" style="left:269px;top:563.4px;width:911.5px;height:59.30000000000007px;background:#fbfdff"></div>
<div class="td" style="left:269px;top:563.4px;width:99px;height:59.30000000000007px"><span style="letter-spacing:0.511px">SCBG231011-</span><br><span style="letter-spacing:0.67px">09</span></div>
<div class="td" style="left:368px;top:563.4px;width:70.39999999999998px;height:59.30000000000007px">A组</div>
<div class="td" style="left:438.4px;top:563.4px;width:64.0px;height:59.30000000000007px">确认</div>
<div class="td" style="left:502.4px;top:563.4px;width:84.0px;height:59.30000000000007px"><span style="letter-spacing:0.596px">2023/08/10</span></div>
<div class="td" style="left:586.4px;top:563.4px;width:104.0px;height:59.30000000000007px"><span style="letter-spacing:0.503px">SCA202310110</span><br><span style="letter-spacing:0.67px">04</span></div>
<div class="td" style="left:690.4px;top:563.4px;width:92.80000000000007px;height:59.30000000000007px"><span style="letter-spacing:0.426px">SCGD2310110</span><br><span style="letter-spacing:0.67px">7</span></div>
<div class="td" style="left:783.2px;top:563.4px;width:104.0px;height:59.30000000000007px"><span style="letter-spacing:0.223px">SCJHXSDD2309</span><br><span style="letter-spacing:0.885px">27-04-230927-</span><br><span style="letter-spacing:0.67px">04</span></div>
<div class="td" style="left:887.2px;top:563.4px;width:66.0px;height:59.30000000000007px"><span style="letter-spacing:0.67px">50</span></div>
<div class="td" style="left:953.2px;top:563.4px;width:78.39999999999986px;height:59.30000000000007px"><span style="letter-spacing:0.67px">0</span></div>
<div class="td" style="left:1031.6px;top:563.4px;width:79.20000000000005px;height:59.30000000000007px"><span style="letter-spacing:0.67px">50</span></div>
<div class="td" style="left:1110.8px;top:563.4px;width:69.70000000000005px;height:59.30000000000007px"><span style="letter-spacing:0.0px">Dell机箱</span></div>
<div class="a" style="left:269px;top:622.7px;width:911.5px;height:59.299999999999955px;background:#e9f2fe"></div>
<div class="td" style="left:269px;top:622.7px;width:99px;height:59.299999999999955px"><span style="letter-spacing:0.511px">SCBG231011-</span><br><span style="letter-spacing:0.67px">10</span></div>
<div class="td" style="left:368px;top:622.7px;width:70.39999999999998px;height:59.299999999999955px">B组</div>
<div class="td" style="left:438.4px;top:622.7px;width:64.0px;height:59.299999999999955px">确认</div>
<div class="td" style="left:502.4px;top:622.7px;width:84.0px;height:59.299999999999955px"><span style="letter-spacing:0.596px">2023/08/10</span></div>
<div class="td" style="left:586.4px;top:622.7px;width:104.0px;height:59.299999999999955px"><span style="letter-spacing:0.503px">SCB202310110</span><br><span style="letter-spacing:0.67px">04</span></div>
<div class="td" style="left:690.4px;top:622.7px;width:92.80000000000007px;height:59.299999999999955px"><span style="letter-spacing:0.426px">SCGD2310110</span><br><span style="letter-spacing:0.67px">8</span></div>
<div class="td" style="left:783.2px;top:622.7px;width:104.0px;height:59.299999999999955px"><span style="letter-spacing:0.223px">SCJHXSDD2309</span><br><span style="letter-spacing:0.885px">27-04-230927-</span><br><span style="letter-spacing:0.67px">04</span></div>
<div class="td" style="left:887.2px;top:622.7px;width:66.0px;height:59.299999999999955px"><span style="letter-spacing:0.67px">50</span></div>
<div class="td" style="left:953.2px;top:622.7px;width:78.39999999999986px;height:59.299999999999955px"><span style="letter-spacing:0.67px">0</span></div>
<div class="td" style="left:1031.6px;top:622.7px;width:79.20000000000005px;height:59.299999999999955px"><span style="letter-spacing:0.67px">50</span></div>
<div class="td" style="left:1110.8px;top:622.7px;width:69.70000000000005px;height:59.299999999999955px"><span style="letter-spacing:0.0px">Dell交换机</span></div>
<div class="a" style="left:269px;top:682px;width:911.5px;height:38.299999999999955px;background:#fbfdff"></div>
<div class="td" style="left:269px;top:682px;width:99px;height:38.299999999999955px"><span style="letter-spacing:0.511px">SCBG231011-</span><br><span style="letter-spacing:0.67px">08</span></div>
<div class="td" style="left:368px;top:682px;width:70.39999999999998px;height:38.299999999999955px">B组</div>
<div class="td" style="left:438.4px;top:682px;width:64.0px;height:38.299999999999955px">确认</div>
<div class="td" style="left:502.4px;top:682px;width:84.0px;height:38.299999999999955px"><span style="letter-spacing:0.596px">2023/07/15</span></div>
<div class="td" style="left:586.4px;top:682px;width:104.0px;height:38.299999999999955px"><span style="letter-spacing:0.503px">SCB202310110</span><br><span style="letter-spacing:0.67px">03</span></div>
<div class="td" style="left:690.4px;top:682px;width:92.80000000000007px;height:38.299999999999955px"><span style="letter-spacing:0.426px">SCGD2310110</span><br><span style="letter-spacing:0.67px">6</span></div>
<div class="td" style="left:783.2px;top:682px;width:104.0px;height:38.299999999999955px"><span style="letter-spacing:0.223px">SCJHXSDD2309</span><br><span style="letter-spacing:0.885px">27-03-230927-</span><br><span style="letter-spacing:0.67px">03</span></div>
<div class="td" style="left:887.2px;top:682px;width:66.0px;height:38.299999999999955px"><span style="letter-spacing:0.67px">40</span></div>
<div class="td" style="left:953.2px;top:682px;width:78.39999999999986px;height:38.299999999999955px"><span style="letter-spacing:0.67px">0</span></div>
<div class="td" style="left:1031.6px;top:682px;width:79.20000000000005px;height:38.299999999999955px"><span style="letter-spacing:0.67px">40</span></div>
<div class="td" style="left:1110.8px;top:682px;width:69.70000000000005px;height:38.299999999999955px">联想交换机</div>
<div class="vl" style="left:367.5px;top:380px;height:340px"></div>
<div class="vl" style="left:367.5px;top:380px;height:36.500px;width:1.300px;background:#e4effd;opacity:1"></div>
<div class="vl" style="left:437.9px;top:380px;height:340px"></div>
<div class="vl" style="left:437.9px;top:380px;height:36.500px;width:1.300px;background:#e4effd;opacity:1"></div>
<div class="vl" style="left:501.9px;top:380px;height:340px"></div>
<div class="vl" style="left:501.9px;top:380px;height:36.500px;width:1.300px;background:#e4effd;opacity:1"></div>
<div class="vl" style="left:585.9px;top:380px;height:340px"></div>
<div class="vl" style="left:585.9px;top:380px;height:36.500px;width:1.300px;background:#e4effd;opacity:1"></div>
<div class="vl" style="left:689.9px;top:380px;height:340px"></div>
<div class="vl" style="left:689.9px;top:380px;height:36.500px;width:1.300px;background:#e4effd;opacity:1"></div>
<div class="vl" style="left:782.7px;top:380px;height:340px"></div>
<div class="vl" style="left:782.7px;top:380px;height:36.500px;width:1.300px;background:#e4effd;opacity:1"></div>
<div class="vl" style="left:886.7px;top:380px;height:340px"></div>
<div class="vl" style="left:886.7px;top:380px;height:36.500px;width:1.300px;background:#e4effd;opacity:1"></div>
<div class="vl" style="left:952.7px;top:380px;height:340px"></div>
<div class="vl" style="left:952.7px;top:380px;height:36.500px;width:1.300px;background:#e4effd;opacity:1"></div>
<div class="vl" style="left:1031.1px;top:380px;height:340px"></div>
<div class="vl" style="left:1031.1px;top:380px;height:36.500px;width:1.300px;background:#e4effd;opacity:1"></div>
<div class="vl" style="left:1110.3px;top:380px;height:340px"></div>
<div class="vl" style="left:1110.3px;top:380px;height:36.500px;width:1.300px;background:#e4effd;opacity:1"></div>
<div class="hl" style="left:269px;top:416.4px;width:911.5px"></div>
<div class="hl" style="left:269px;top:460.0px;width:911.5px"></div>
<div class="hl" style="left:269px;top:503.6px;width:911.5px"></div>
<div class="hl" style="left:269px;top:562.9px;width:911.5px"></div>
<div class="hl" style="left:269px;top:622.2px;width:911.5px"></div>
<div class="hl" style="left:269px;top:681.5px;width:911.5px"></div>
<div class="hl" style="left:269px;top:720.300px;width:918px"></div>
<div class="a" style="left:1111px;top:709.800px;width:69.300px;height:10.500px;background:#e9f2fe;border-top:1px solid #c6ddf8"></div>
<div class="a" style="left:1180.800px;top:381px;width:5.800px;height:150px;border-radius:3px;background:#bec0c4"></div>
<div class="a" style="left:271px;top:715px;width:597px;height:5.500px;border-radius:3px;background:#bcbdbf"></div>
<div class="a" style="left:270px;top:721.300px;width:917px;height:36px;background:#fff"></div>
<div class="pg" style="left:1016.200px;width:26px">1</div>
<div class="t " style="left:1045.8px;top:731.7px;font-size:11px;color:#36404d">/ 1</div>
<div class="pg" style="left:1067.5px;width:24.5px"><svg style="left:6.599999999999955px;top:7px" width="9" height="9" viewBox="0 0 9 9"><path d="M1.700 1.200v6.600M7.300 1.200L3.300 4.500l4 3.300" fill="none" stroke="#3a4452" stroke-width="1.300" stroke-linecap="round" stroke-linejoin="round"/></svg></div>
<div class="pg" style="left:1095.5px;width:50.3px"><svg style="left:6.500000000000046px;top:7px" width="9" height="9" viewBox="0 0 9 9"><path d="M6.600 1L2.700 4.500 6.600 8" fill="none" stroke="#3a4452" stroke-width="1.300" stroke-linecap="round" stroke-linejoin="round"/></svg></div>
<div class="a" style="left:1119.900px;top:728.400px;width:1.200px;height:21.700px;background:#cde0fa"></div>
<svg style="left:1128.700px;top:735.400px" width="9" height="9" viewBox="0 0 9 9"><path d="M2.400 1l3.900 3.500L2.400 8" fill="none" stroke="#3a4452" stroke-width="1.300" stroke-linecap="round" stroke-linejoin="round"/></svg>
<div class="pg" style="left:1149.2px;width:25px"><svg style="left:6.599999999999955px;top:7px" width="9" height="9" viewBox="0 0 9 9"><path d="M7.300 1.200v6.600M1.700 1.200l4 3.300-4 3.300" fill="none" stroke="#3a4452" stroke-width="1.300" stroke-linecap="round" stroke-linejoin="round"/></svg></div>
</div>
</body>
</html>
